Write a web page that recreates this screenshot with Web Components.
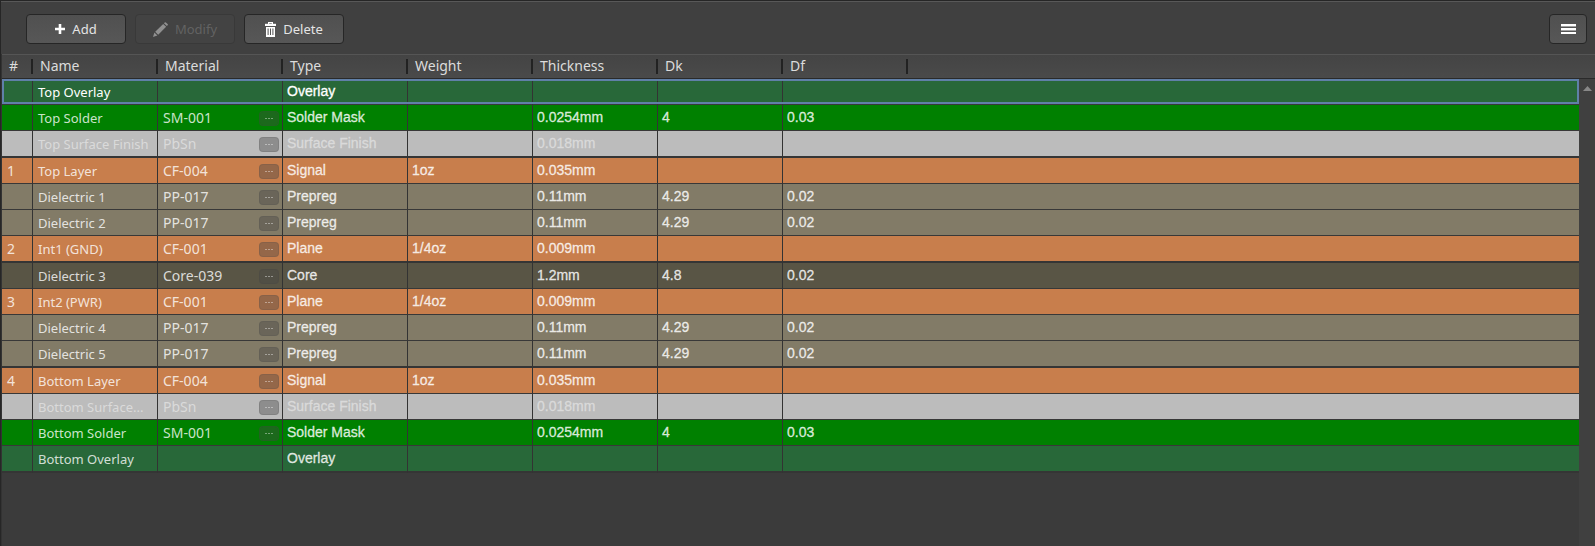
<!DOCTYPE html>
<html lang="en">
<head>
<meta charset="utf-8">
<title>Layer Stack</title>
<style>
  html, body { margin: 0; height: 100%; background: #3b3b3b; }
  body { font: 14px/20px "Noto Sans", "Open Sans", sans-serif; color: #e0e0e0; }
</style>
</head>
<body>
<stack-panel>
  <stack-toolbar slot="toolbar">
    <tool-button icon="plus">Add</tool-button>
    <tool-button icon="pencil" disabled>Modify</tool-button>
    <tool-button icon="trash">Delete</tool-button>
    <tool-button slot="end" icon="menu" compact label="Menu"></tool-button>
  </stack-toolbar>
  <layer-table></layer-table>
  <scroll-rail slot="rail"></scroll-rail>
</stack-panel>
<script>
const define = (name, html, setup) => {
  const tpl = document.createElement('template');
  tpl.innerHTML = html;
  customElements.define(name, class extends HTMLElement {
    connectedCallback() {
      if (this.shadowRoot) return;
      this.attachShadow({ mode: 'open' }).append(tpl.content.cloneNode(true));
      if (setup) setup(this, this.shadowRoot);
    }
  });
};

define('stack-panel', `
  <style>
    :host { display: flex; flex-direction: column; min-height: 100vh; box-sizing: border-box;
      border-top: 1px solid #262626; border-left: 1px solid #262626; }
    .body { flex: 1; display: grid; grid-template-columns: minmax(0, 1fr) 16px;
      grid-template-rows: 25px 1fr; border-left: 1px solid #333; }
    .main { grid-area: 1 / 1 / 3 / 2; }
    .cap { grid-area: 1 / 2; box-sizing: border-box; background: linear-gradient(#444, #4a4a4a);
      border-top: 1px solid #555; border-bottom: 1px solid #2a2a2a; }
    .rail { grid-area: 2 / 2; display: grid; }
  </style>
  <slot name="toolbar"></slot>
  <div class="body">
    <div class="main"><slot></slot></div>
    <div class="cap"></div>
    <div class="rail"><slot name="rail"></slot></div>
  </div>`);

define('stack-toolbar', `
  <style>
    :host { display: flex; justify-content: space-between; box-sizing: border-box; height: 53px;
      padding: 12px 8px 0 25px; background: #404040; border-top: 1px solid #585858; }
    div { display: flex; gap: 9px; }
  </style>
  <div><slot></slot></div>
  <div><slot name="end"></slot></div>`);

const ICONS = {
  plus: '<svg width="10" height="10" viewBox="0 0 10 10"><path d="M5 0V10M0 5H10" stroke="currentColor" stroke-width="2.6"/></svg>',
  pencil: '<svg width="15" height="15" viewBox="0 0 15 15" fill="currentColor"><path d="M0 15 1.4 10.6 4.4 13.6Z"/><path d="M2.2 9.8 10.2 1.9 13.1 4.8 5.2 12.8Z"/><path d="M10.9 1.2 11.7.4Q12.3-.1 12.9.4L14.6 2.1Q15.1 2.7 14.6 3.3L13.8 4.1Z"/></svg>',
  trash: '<svg width="11" height="15" viewBox="0 0 11 15"><path d="M3.6 2V.6H7.4V2" fill="none" stroke="currentColor" stroke-width="1.2"/><path d="M0 1.8H11V4H0Z" fill="currentColor"/><path fill-rule="evenodd" d="M1 5H10V15H1ZM2.6 6.5V13H3.6V6.5ZM5 6.5V13H6V6.5ZM7.4 6.5V13H8.4V6.5Z" fill="currentColor"/></svg>',
  menu: '<svg width="15" height="10" viewBox="0 0 15 10" shape-rendering="crispEdges" fill="currentColor"><path d="M0 0H15V2H0ZM0 4H15V6H0ZM0 8H15V10H0Z"/><path d="M0 2H15V3H0ZM0 6H15V7H0Z" opacity=".45"/></svg>'
};

define('tool-button', `
  <style>
    :host { display: block; width: 100px; }
    :host([compact]) { width: 38px; }
    button { display: flex; align-items: center; justify-content: center; gap: 7px; box-sizing: border-box;
      width: 100%; height: 30px; margin: 0; padding: 0; font: inherit; font-size: 13px; color: #e4e4e4;
      background: linear-gradient(#505050, #575757); border: 1px solid #262626; border-radius: 4px; }
    svg { display: block; color: #fff; }
    button:disabled { color: #626262; background: #434343; border-color: #393939; }
    button:disabled svg { color: #909090; }
    :host([compact]) slot { display: none; }
  </style>
  <button type="button"><slot></slot></button>`, (el, root) => {
  const b = root.querySelector('button');
  b.insertAdjacentHTML('afterbegin', ICONS[el.getAttribute('icon')]);
  b.disabled = el.hasAttribute('disabled');
  if (el.hasAttribute('label')) b.setAttribute('aria-label', el.getAttribute('label'));
});

define('more-button', `
  <style>
    :host { display: block; flex: none; }
    button { display: flex; align-items: center; justify-content: center; gap: 1px; box-sizing: border-box;
      width: 20px; height: 15px; margin: 0; padding: 0; border: 1px solid rgba(70,70,70,.15); border-radius: 4px;
      background: rgba(70,70,70,.4); }
    i { width: 2px; height: 1px; background: rgba(255,255,255,.4); }
  </style>
  <button type="button" aria-label="Choose material"><i></i><i></i><i></i></button>`);

define('scroll-rail', `
  <style>
    :host { display: block; background: #404040; }
    svg { display: block; margin: 7px auto 0 4px; }
  </style>
  <svg width="9" height="5" viewBox="0 0 9 5"><path d="M0 5 4.5 0 9 5Z" fill="#888"/></svg>`);

const ROWS = [
  ['overlay', '', 'Top Overlay', '', 'Overlay', '', '', '', '', 'selected'],
  ['mask', '', 'Top Solder', 'SM-001', 'Solder Mask', '', '0.0254mm', '4', '0.03'],
  ['finish', '', 'Top Surface Finish', 'PbSn', 'Surface Finish', '', '0.018mm', '', '', 'edge'],
  ['copper', '1', 'Top Layer', 'CF-004', 'Signal', '1oz', '0.035mm', '', ''],
  ['prepreg', '', 'Dielectric 1', 'PP-017', 'Prepreg', '', '0.11mm', '4.29', '0.02'],
  ['prepreg', '', 'Dielectric 2', 'PP-017', 'Prepreg', '', '0.11mm', '4.29', '0.02'],
  ['copper', '2', 'Int1 (GND)', 'CF-001', 'Plane', '1/4oz', '0.009mm', '', '', 'edge'],
  ['core', '', 'Dielectric 3', 'Core-039', 'Core', '', '1.2mm', '4.8', '0.02'],
  ['copper', '3', 'Int2 (PWR)', 'CF-001', 'Plane', '1/4oz', '0.009mm', '', ''],
  ['prepreg', '', 'Dielectric 4', 'PP-017', 'Prepreg', '', '0.11mm', '4.29', '0.02'],
  ['prepreg', '', 'Dielectric 5', 'PP-017', 'Prepreg', '', '0.11mm', '4.29', '0.02', 'edge'],
  ['copper', '4', 'Bottom Layer', 'CF-004', 'Signal', '1oz', '0.035mm', '', ''],
  ['finish', '', 'Bottom Surface...', 'PbSn', 'Surface Finish', '', '0.018mm', '', ''],
  ['mask', '', 'Bottom Solder', 'SM-001', 'Solder Mask', '', '0.0254mm', '4', '0.03'],
  ['overlay', '', 'Bottom Overlay', '', 'Overlay', '', '', '', '', 'edge']
];

define('layer-table', `
  <style>
    :host { display: block; }
    table { width: 100%; table-layout: fixed; border-collapse: separate; border-spacing: 0; }
    .num { width: 31px; } .col { width: 125px; }
    th { box-sizing: border-box; height: 25px; padding: 0; font-weight: 400; text-align: left; color: #dcdcdc;
      background: linear-gradient(#444, #4a4a4a); border-top: 1px solid #555; border-bottom: 1px solid #2a2a2a; }
    th span { display: block; height: 15px; line-height: 13px; padding-left: 7px; border-right: 2px solid #222; }
    th.rest span { border: 0; }
    td { box-sizing: border-box; height: 26px; padding: 0 3px 0 5px; line-height: 20px; white-space: nowrap; overflow: hidden;
      border-right: 1px solid #333; border-bottom: 1px solid #383838; color: rgba(255,255,255,.8); }
    td:last-child { border-right: 0; }
    td.val { font-family: "Liberation Sans", Arial, sans-serif; padding-left: 4px; padding-bottom: 1px; -webkit-text-stroke: .3px; }
    td.name, td.mat { padding-top: 1px; }
    td.name { font-size: 13px; }
    td div { display: flex; align-items: center; justify-content: space-between; }
    tr { background: var(--c); }
    tr.edge td { height: 27px; border-bottom: 2px solid #353535; }
    .overlay { --c: #286839; } .mask { --c: #008000; } .finish { --c: #bcbcbc; }
    .copper { --c: #c87e4c; } .prepreg { --c: #827b67; } .core { --c: #595545; }
    .finish td { color: #dadada; }
    .selected { position: relative; }
    .selected td { color: #fff; }
    .selected td:first-child::after { content: ""; position: absolute; inset: 0 0 1px 0; border: 2px solid #6080a8; pointer-events: none; }
  </style>
  <table>
    <colgroup><col class="num"><col class="col" span="7"><col></colgroup>
    <thead><tr><th><span>#</span></th><th><span>Name</span></th><th><span>Material</span></th><th><span>Type</span></th><th><span>Weight</span></th><th><span>Thickness</span></th><th><span>Dk</span></th><th><span>Df</span></th><th class="rest"><span></span></th></tr></thead>
    <tbody></tbody>
  </table>`, (el, root) => {
  root.querySelector('tbody').innerHTML = ROWS.map(([kind, num, name, mat, type, weight, thick, dk, df, state = '']) => `
    <tr class="${kind} ${state}"><td>${num}</td><td class="name">${name}</td>
      <td class="mat">${mat && `<div>${mat}<more-button></more-button></div>`}</td>
      <td class="val">${type}</td><td class="val">${weight}</td><td class="val">${thick}</td>
      <td class="val">${dk}</td><td class="val" colspan="2">${df}</td></tr>`).join('');
});
</script>
</body>
</html>
